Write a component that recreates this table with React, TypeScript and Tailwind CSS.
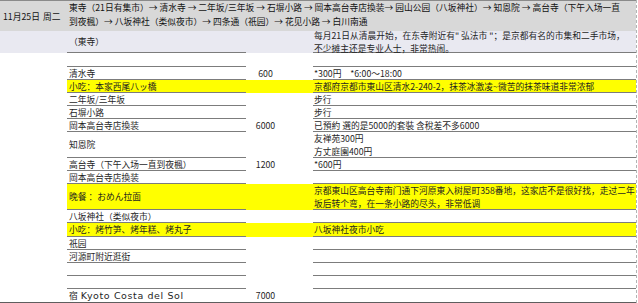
type Row = {
  h: string;
  place?: string;
  price?: string;
  note?: string[];
  hl?: boolean;
  last?: boolean;
};

const rows: Row[] = [
  { h: "h-[14px]" },
  { h: "h-[13px]", place: "清水寺", price: "600", note: ["*300円　*6:00～18:00"] },
  {
    h: "h-[13px]",
    place: "小吃：本家西尾八ッ橋",
    note: ["京都府京都市東山区清水2-240-2，抹茶冰激凌~微苦的抹茶味道非常浓郁"],
    hl: true,
  },
  { h: "h-[13px]", place: "二年坂/三年坂", note: ["步行"] },
  { h: "h-[13px]", place: "石塀小路", note: ["步行"] },
  { h: "h-[13px]", place: "岡本高台寺店換装", price: "6000", note: ["已預約 選的是5000的套裝 含稅差不多6000"] },
  { h: "h-[26px]", place: "知恩院", note: ["友禅苑300円", "方丈庭園400円"] },
  { h: "h-[13px]", place: "高台寺（下午入场一直到夜楓）", price: "1200", note: ["*600円"] },
  { h: "h-[13px]", place: "岡本高台寺店換装" },
  {
    h: "h-[26px]",
    place: "晚餐 ：おめん拉面",
    note: [
      "京都東山区高台寺南门通下河原東入树屋町358番地，这家店不是很好找，走过二年",
      "坂后转个弯，在一条小路的尽头，非常低调",
    ],
    hl: true,
  },
  { h: "h-[13px]", place: "八坂神社（类似夜市）" },
  { h: "h-[14px]", place: "小吃：烤竹笋、烤年糕、烤丸子", note: ["八坂神社夜市小吃"], hl: true },
  { h: "h-[13px]", place: "祇园" },
  { h: "h-[13px]", place: "河源町附近逛街" },
  { h: "h-[13px]" },
  { h: "h-[13px]" },
  { h: "h-[14px]", place: "宿", price: "7000", last: true },
];

function TableRow({ r }: { r: Row }) {
  const line = r.last ? "" : "border-b border-[#7c7c7c]";
  return (
    <div className={`flex ${r.h} ${r.last ? "border-b border-[#5e5e5e]" : ""}`}>
      <div className="w-[67px] shrink-0" />
      <div className={`flex flex-1 ${r.hl ? "bg-[#ffff00]" : ""}`}>
        <div className={`w-[179px] shrink-0 flex items-center pl-[2px] whitespace-nowrap ${line}`}>
          {r.place}
          {r.last && (
            <span className="ml-[3px] font-['DejaVu_Sans',sans-serif] text-[9.5px] tracking-[0.6px]">
              Kyoto Costa del Sol
            </span>
          )}
        </div>
        <div className="w-[67px] shrink-0 flex items-center">
          <span className="w-[39px] text-center">{r.price}</span>
        </div>
        <div className={`flex-1 flex flex-col justify-center pl-[1px] whitespace-nowrap ${line}`}>
          {r.note?.map((n) => (
            <div key={n}>{n}</div>
          ))}
        </div>
      </div>
    </div>
  );
}

export default function App() {
  return (
    <div className="w-[638px] h-[303px] overflow-hidden bg-white text-[8.75px] leading-[13px] text-[#1f1f1f] font-['Noto_Sans_CJK_SC','Noto_Sans',sans-serif]">
      <div className="w-[637px] h-[303px] border-r border-dashed border-[#b4b4b4]">
        {/* day header */}
        <div className="flex h-[31px] bg-[#d8d8d8] border-t border-[#8a8a8a] text-[#121212]">
          <div className="w-[43px] shrink-0 pl-[3px] flex items-center">11月25日</div>
          <div className="w-[24px] shrink-0 flex items-center">周二</div>
          <div className="flex-1 pl-[2px] leading-[14px] whitespace-nowrap overflow-hidden">
            <div>東寺（21日有集市）→ 清水寺 → 二年坂/三年坂 → 石塀小路 → 岡本高台寺店換装→ 园山公园（八坂神社）→ 知恩院 → 高台寺（下午入场一直</div>
            <div>到夜楓）→ 八坂神社（类似夜市）→ 四条通（祇园）→ 花见小路 → 白川南通</div>
          </div>
        </div>

        {/* 東寺 */}
        <div className="flex h-[22px] bg-[#e9e9f1]">
          <div className="w-[67px] shrink-0" />
          <div className="w-[179px] shrink-0 flex items-center pl-[2px] border-b border-[#7c7c7c]">（東寺）</div>
          <div className="w-[67px] shrink-0" />
          <div className="flex-1 flex flex-col justify-center pl-[1px] whitespace-nowrap border-b border-[#7c7c7c]">
            <div>每月21日从清晨开始，在东寺附近有" 弘法市 "；是京都有名的市集和二手市场，</div>
            <div>不少摊主还是专业人士，非常热闹。</div>
          </div>
        </div>

        {rows.map((r, i) => (
          <TableRow key={i} r={r} />
        ))}
      </div>
    </div>
  );
}
